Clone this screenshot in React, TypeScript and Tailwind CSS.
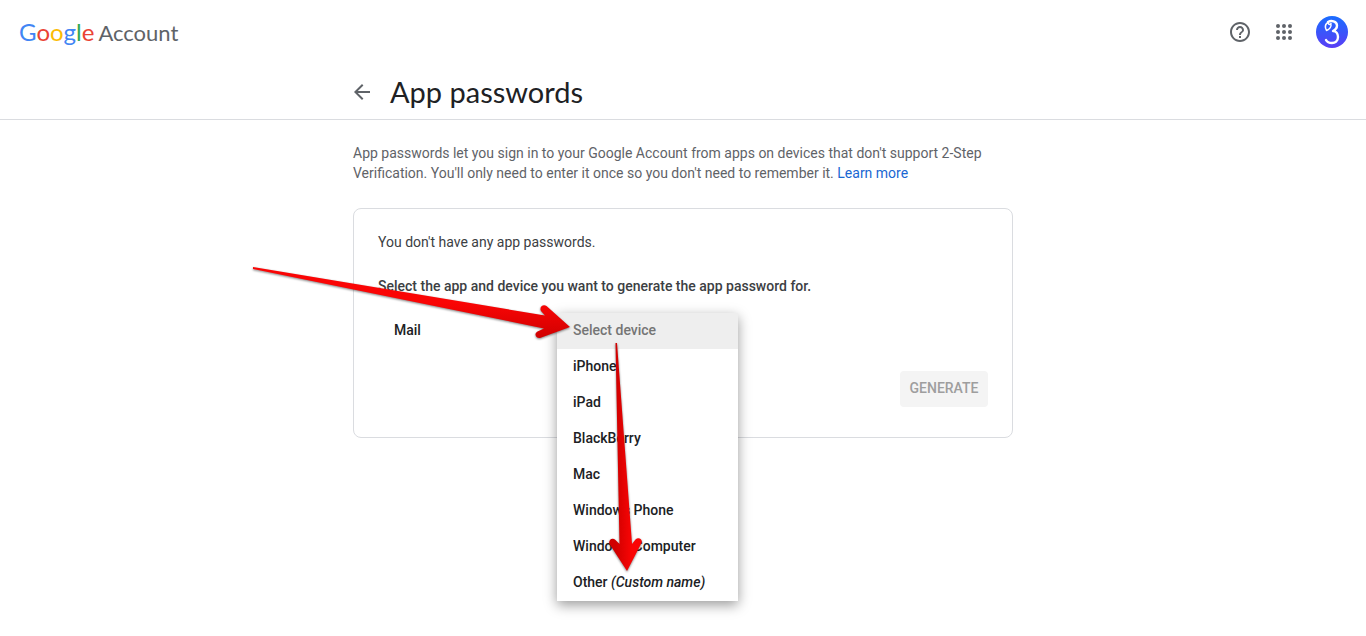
import React, { useState } from 'react';

const DEVICES = ['iPhone', 'iPad', 'BlackBerry', 'Mac', 'Windows Phone', 'Windows Computer'];

const Header: React.FC = () => (
  <header className="flex h-16 items-center justify-between pl-[19px] pr-[18px]">
    <a href="#" className="flex items-baseline gap-1 font-['Lato',sans-serif] text-[22px] leading-8 text-[#5f6368]">
      <span className="text-2xl leading-8">
        <span className="text-[#4285f4]">G</span>
        <span className="text-[#ea4335]">o</span>
        <span className="text-[#fbbc05]">o</span>
        <span className="text-[#4285f4]">g</span>
        <span className="text-[#34a853]">l</span>
        <span className="text-[#ea4335]">e</span>
      </span>
      <span>Account</span>
    </a>

    <div className="flex items-center gap-5">
      <button type="button" aria-label="Help" className="text-[#5f6368]">
        <svg viewBox="0 0 24 24" className="h-6 w-6" fill="currentColor">
          <path d="M11 18h2v-2h-2v2zm1-16C6.48 2 2 6.48 2 12s4.48 10 10 10 10-4.48 10-10S17.52 2 12 2zm0 18c-4.41 0-8-3.59-8-8s3.59-8 8-8 8 3.59 8 8-3.59 8-8 8zm0-14c-2.21 0-4 1.79-4 4h2c0-1.1.9-2 2-2s2 .9 2 2c0 2-3 1.75-3 5h2c0-2.25 3-2.5 3-5 0-2.21-1.79-4-4-4z" />
        </svg>
      </button>
      <button type="button" aria-label="Google apps" className="text-[#5f6368]">
        <svg viewBox="0 0 24 24" className="h-6 w-6" fill="currentColor">
          {[6, 12, 18].map(y => [6, 12, 18].map(x => <circle key={`${x}-${y}`} cx={x} cy={y} r="2" />))}
        </svg>
      </button>
      <button type="button" aria-label="Profile">
        <svg viewBox="0 0 32 32" className="h-8 w-8">
          <defs>
            <linearGradient id="avatar" x1="0" y1="0" x2="0" y2="1">
              <stop offset="0" stopColor="#1a6dff" />
              <stop offset="1" stopColor="#5a3df5" />
            </linearGradient>
          </defs>
          <circle cx="16" cy="16" r="16" fill="url(#avatar)" />
          <g fill="none" stroke="#fff" strokeLinecap="round" strokeLinejoin="round">
            <path strokeWidth="2.4" d="M12 6c3-2 9-1 9 3.5c0 3-2 4.5-4 5.5c3 0 5 2.500 5 6c0 4-3 6-6 6c-3 0-5-1-6-3" />
            <path strokeWidth="1.5" d="M12 6c-2.5 2-3.500 5-1.500 8.500c3-1 5-4 4.500-7M12 6c0 2 1 3 3 2" />
          </g>
        </svg>
      </button>
    </div>
  </header>
);

const App: React.FC = () => {
  const [app, setApp] = useState('Mail');
  const [device, setDevice] = useState('');

  return (
    <div className="min-h-screen bg-white font-['Roboto',sans-serif] text-sm leading-5 text-[#3c4043]">
      <Header />

      <div className="border-b border-[#dadce0]">
        <div className="mx-auto flex h-[55px] max-w-[660px] items-center gap-4">
          <a href="#" aria-label="Back" className="text-[#5f6368]">
            <svg viewBox="0 0 24 24" className="-ml-[3px] h-6 w-6" fill="currentColor">
              <path d="M20 11H7.830l5.590-5.590L12 4l-8 8 8 8 1.410-1.410L7.830 13H20v-2z" />
            </svg>
          </a>
          <h1 className="font-['Lato',sans-serif] text-[29px] leading-9 text-[#202124]">App passwords</h1>
        </div>
      </div>

      <main className="relative mx-auto max-w-[660px] pt-[23px]">
        <p className="text-[#5f6368]">
          App passwords let you sign in to your Google Account from apps on devices that don't support 2-Step
          Verification. You'll only need to enter it once so you don't need to remember it.{' '}
          <a href="#" className="text-[#1967d2]">Learn more</a>
        </p>

        <form
          className="mt-[25px] rounded-lg border border-[#dadce0] px-6 pt-[23px] pb-[30px]"
          onSubmit={e => e.preventDefault()}
        >
          <p>You don't have any app passwords.</p>
          <p className="mt-6 font-medium">Select the app and device you want to generate the app password for.</p>

          <div className="mt-[17px] flex h-9 items-center">
            <select
              aria-label="Select app"
              value={app}
              onChange={e => setApp(e.target.value)}
              className="h-9 w-[179px] appearance-none bg-transparent px-4 pb-0.5 font-medium text-[#202124]"
            >
              <option>Mail</option>
              <option>Calendar</option>
              <option>Contacts</option>
              <option>YouTube</option>
            </select>
            <div className="relative h-9 w-[181px]">
              {/* Open device menu */}
              <div
                role="listbox"
                aria-label="Select device"
                className="absolute left-0 top-0 flex w-full flex-col bg-white font-medium text-[#202124] shadow-[0_4px_12px_rgba(0,0,0,0.4)]"
              >
                <button
                  type="button"
                  role="option"
                  aria-selected={device === ''}
                  onClick={() => setDevice('')}
                  className="h-9 bg-[#eeeeee] px-4 pb-0.5 text-left text-[#757575]"
                >
                  Select device
                </button>
                {DEVICES.map(name => (
                  <button
                    key={name}
                    type="button"
                    role="option"
                    aria-selected={device === name}
                    onClick={() => setDevice(name)}
                    className="h-9 px-4 pb-0.5 text-left"
                  >
                    {name}
                  </button>
                ))}
                <button
                  type="button"
                  role="option"
                  aria-selected={device === 'Other'}
                  onClick={() => setDevice('Other')}
                  className="h-9 px-4 pb-0.5 text-left"
                >
                  Other <em>(Custom name)</em>
                </button>
              </div>
            </div>
          </div>

          <div className="mt-[22px] flex justify-end">
            <button
              type="submit"
              disabled
              className="h-9 w-[88px] rounded-sm bg-[#f4f4f4] pb-0.5 text-center font-medium text-[#9e9e9e]"
            >
              GENERATE
            </button>
          </div>
        </form>

        {/* Pointer arrows over the form */}
        <svg
          viewBox="353 120 660 500"
          className="pointer-events-none absolute left-0 top-0 h-[500px] w-[660px] overflow-visible drop-shadow-[0_1px_1px_rgba(0,0,0,0.5)]"
          aria-hidden="true"
        >
          <defs>
            <linearGradient id="arrow-right" x1="0" y1="0" x2="0" y2="1">
              <stop offset="0.5" stopColor="#fa0505" />
              <stop offset="1" stopColor="#d00000" />
            </linearGradient>
            <linearGradient id="arrow-down" x1="0" y1="0" x2="1" y2="0">
              <stop offset="0.2" stopColor="#d00000" />
              <stop offset="0.7" stopColor="#fa0505" />
            </linearGradient>
          </defs>
          <path
            fill="url(#arrow-right)"
            d="M253 267L545 315.500L541 311C539 307 543 304 546.500 306L570 327L540 338C536 338.500 533.500 334 537.500 331.500L544 328.500L253 269Z"
          />
          <path
            fill="url(#arrow-down)"
            d="M615.500 343H617L632 544L635.500 539.500C639 536.500 643 540 641.500 543L627 571L609.500 544C608 540.500 612 537 615.500 540L619.500 544Z"
          />
        </svg>
      </main>
    </div>
  );
};

export default App;
